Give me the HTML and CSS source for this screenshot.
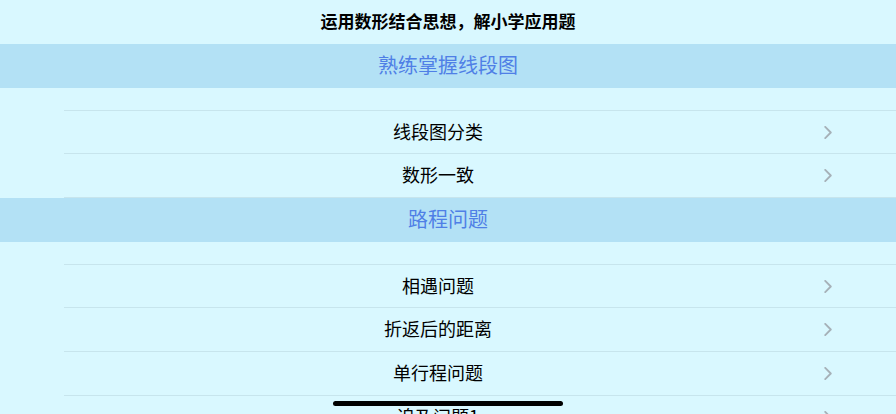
FILE: index.html
```html
<!DOCTYPE html>
<html lang="zh-CN">
<head>
<meta charset="utf-8">
<title>运用数形结合思想，解小学应用题</title>
<link rel="stylesheet" href="styles.css">
</head>
<body>
<div class="screen">
  <header class="nav">运用数形结合思想，解小学应用题</header>

  <div class="section-header">熟练掌握线段图</div>
  <div class="spacer"></div>
  <ul class="list">
    <li class="row"><span class="label">线段图分类</span><svg class="chev" viewBox="0 0 8 14"><path d="M1 1l6 6-6 6" /></svg></li>
    <li class="row"><span class="label">数形一致</span><svg class="chev" viewBox="0 0 8 14"><path d="M1 1l6 6-6 6" /></svg></li>
  </ul>

  <div class="section-header">路程问题</div>
  <div class="spacer"></div>
  <ul class="list">
    <li class="row"><span class="label">相遇问题</span><svg class="chev" viewBox="0 0 8 14"><path d="M1 1l6 6-6 6" /></svg></li>
    <li class="row"><span class="label">折返后的距离</span><svg class="chev" viewBox="0 0 8 14"><path d="M1 1l6 6-6 6" /></svg></li>
    <li class="row"><span class="label">单行程问题</span><svg class="chev" viewBox="0 0 8 14"><path d="M1 1l6 6-6 6" /></svg></li>
    <li class="row"><span class="label">追及问题1</span><svg class="chev" viewBox="0 0 8 14"><path d="M1 1l6 6-6 6" /></svg></li>
  </ul>

  <div class="home-indicator"></div>
</div>
</body>
</html>
```

FILE: styles.css
```css
html, body {
  margin: 0;
  padding: 0;
  background: #d9f8ff;
}
body {
  font-family: "Noto Sans CJK SC", "Noto Sans", sans-serif;
  color: #000;
}
.screen {
  position: relative;
  width: 896px;
  height: 414px;
  overflow: hidden;
  background: #d9f8ff;
}
.nav {
  box-sizing: border-box;
  height: 44px;
  padding-bottom: 4px;
  display: flex;
  align-items: center;
  justify-content: center;
  font-size: 17px;
  font-weight: 700;
}
.section-header {
  box-sizing: border-box;
  height: 44px;
  padding-bottom: 4px;
  background: #b3e1f5;
  display: flex;
  align-items: center;
  justify-content: center;
  font-size: 20px;
  color: #4f7fe6;
}
.spacer {
  height: 22px;
}
.list {
  list-style: none;
  margin: 0 0 0 64px;
  padding: 0;
}
.row {
  box-sizing: border-box;
  height: 44px;
  border-bottom: 1px solid #c7e5ed;
  display: flex;
  align-items: center;
  padding-right: 64px;
  font-size: 18px;
}
.row:first-child {
  border-top: 1px solid #c7e5ed;
}
.label {
  flex: 1;
  text-align: center;
  padding-right: 12px;
  padding-bottom: 3px;
}
.chev {
  width: 8px;
  height: 13px;
  fill: none;
  stroke: #a6b1b8;
  stroke-width: 2;
  stroke-linecap: round;
  stroke-linejoin: round;
}
.home-indicator {
  position: absolute;
  left: 333px;
  bottom: 8px;
  width: 230px;
  height: 5px;
  border-radius: 3px;
  background: #000;
}
```
